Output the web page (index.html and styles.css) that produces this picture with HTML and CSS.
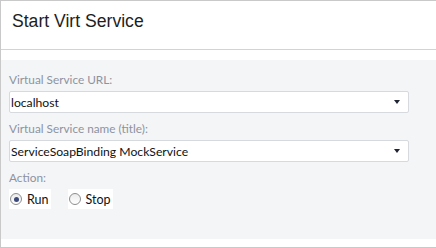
FILE: index.html
```html
<!DOCTYPE html>
<html>
<head>
<meta charset="utf-8">
<link rel="stylesheet" href="styles.css">
</head>
<body>
<div class="dialog">
  <div class="header">
    <h1 class="title">Start Virt Service</h1>
  </div>
  <div class="spacer"></div>
  <div class="content">
    <div class="field">
      <div class="label">Virtual Service URL:</div>
      <div class="select">
        <span class="select-value">localhost</span>
        <span class="caret"></span>
      </div>
    </div>
    <div class="field">
      <div class="label">Virtual Service name (title):</div>
      <div class="select">
        <span class="select-value">ServiceSoapBinding MockService</span>
        <span class="caret"></span>
      </div>
    </div>
    <div class="field">
      <div class="label">Action:</div>
      <div class="radios">
        <label class="radio">
          <span class="radio-circle checked"><span class="radio-dot"></span></span>
          <span class="radio-text">Run</span>
        </label>
        <label class="radio">
          <span class="radio-circle"></span>
          <span class="radio-text">Stop</span>
        </label>
      </div>
    </div>
  </div>
  <div class="footer"></div>
</div>
</body>
</html>
```

FILE: styles.css
```css
* { box-sizing: border-box; }
html, body { margin: 0; padding: 0; background: #ffffff; }
body { font-family: Lato, "Open Sans", sans-serif; }

.dialog {
  width: 436px;
  height: 248px;
  border-top: 1px solid #c9c9c9;
  border-left: 1px solid #c9c9c9;
  border-bottom: 1px solid #c9c9c9;
  display: flex;
  flex-direction: column;
  background: #ffffff;
}

.header {
  height: 49px;
  border-bottom: 1px solid #d3d3d3;
  padding: 10px 0 0 11px;
  flex: none;
}
.title {
  margin: 0;
  font-family: "Liberation Sans", Arial, sans-serif;
  font-weight: normal;
  font-size: 17.6px;
  line-height: 21px;
  color: #1e1e1e;
}

.spacer { height: 10px; flex: none; }

.content {
  background: #f4f5f7;
  height: 179px;
  flex: none;
  padding: 12px 27px 0 8px;
}

.field { margin-bottom: 8px; }

.label {
  font-size: 11.8px;
  line-height: 16px;
  color: #8c93a0;
  margin-bottom: 3px;
}

.select {
  height: 22px;
  background: #ffffff;
  border: 1px solid #d6d9de;
  border-radius: 2px;
  display: flex;
  align-items: center;
  justify-content: space-between;
  padding: 0 8px 0 1px;
}
.select-value {
  font-size: 12.2px;
  color: #111111;
}
.caret {
  width: 0;
  height: 0;
  border-left: 3.5px solid transparent;
  border-right: 3.5px solid transparent;
  border-top: 4px solid #1f2430;
}

.radios {
  display: flex;
  gap: 17px;
  height: 20px;
}
.radio {
  display: flex;
  align-items: center;
  background: #ffffff;
  padding: 0 2px 0 1px;
}
.radio-circle {
  width: 12px;
  height: 12px;
  border-radius: 50%;
  border: 1px solid #8d8d8d;
  background: linear-gradient(#ececec, #ffffff);
  display: flex;
  align-items: center;
  justify-content: center;
  margin-right: 5px;
}
.radio-dot {
  width: 5px;
  height: 5px;
  border-radius: 50%;
  background: #3b4a7a;
}
.radio-text {
  font-size: 12.5px;
  color: #111111;
}

.footer { flex: 1; }
```
